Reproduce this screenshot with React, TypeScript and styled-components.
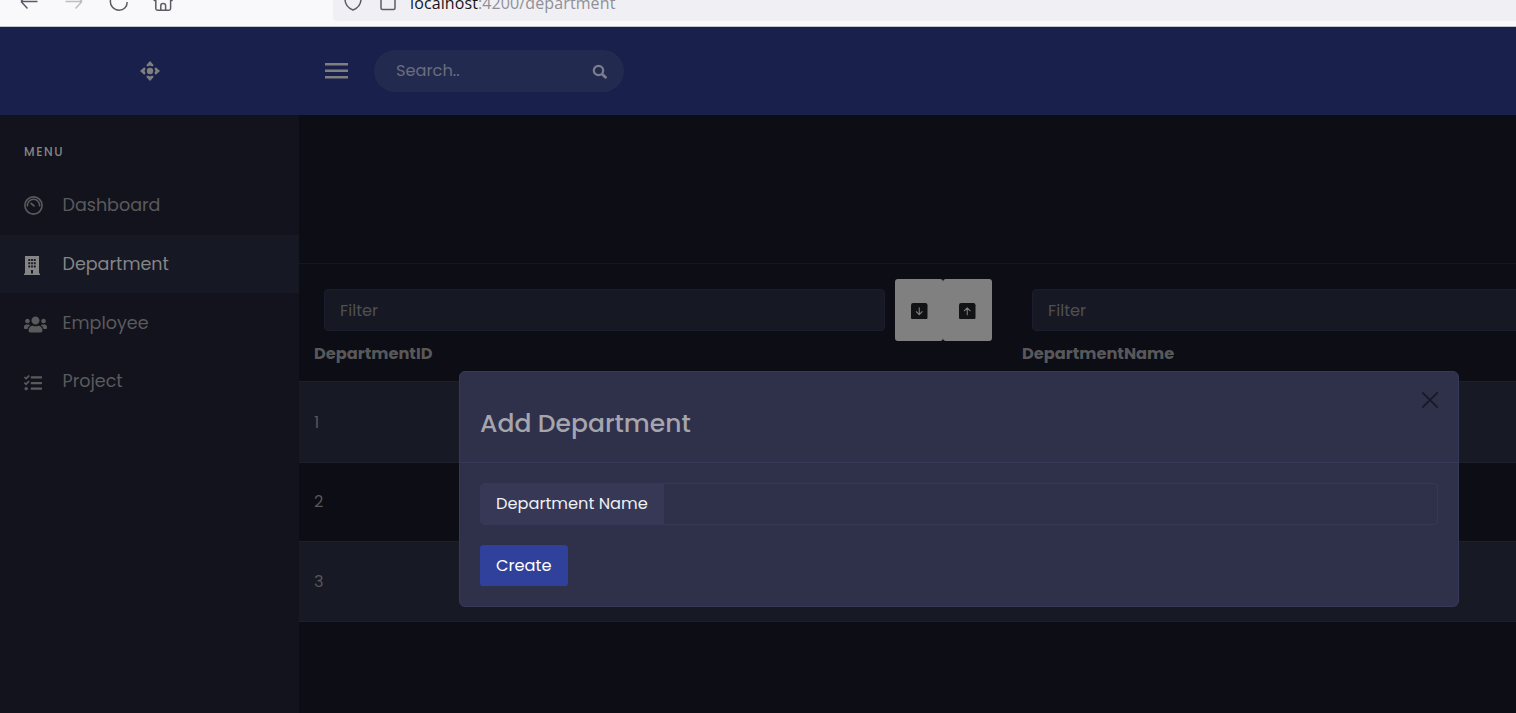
import React from "react";
import styled, { createGlobalStyle } from "styled-components";
import { FaUsers, FaTasks } from "react-icons/fa";

const Global = createGlobalStyle`
  *{box-sizing:border-box}
  html,body{margin:0;background:#0c0d15;overflow:hidden}
  body{font-family:Poppins,Inter,"Liberation Sans",sans-serif;font-size:16.22px;line-height:24px;color:#58585a}
  svg{display:block;flex:none}
`;

const Page = styled.div`height:713px;width:1516px;display:flex;flex-direction:column;overflow:hidden;position:relative;`;
const Browser = styled.div`height:27px;flex:none;background:#f9f9fb;border-bottom:1px solid #c3c3c9;display:flex;align-items:flex-start;`;
const BrowserIcons = styled.div`width:333px;display:flex;padding-left:18px;gap:21px;`;
const Address = styled.div`flex:1;height:21px;background:#f0f0f4;border-radius:0 0 0 4px;display:flex;padding-left:10px;`;
const Url = styled.div`font:16px/24px "Open Sans","Noto Sans",sans-serif;letter-spacing:0.11px;margin:-9px 0 0 10px;color:#8f8f97;white-space:nowrap;b{font-weight:400;color:#15141a}`;
const Header = styled.header`height:88px;flex:none;background:#19204c;display:flex;align-items:center;`;
const Brand = styled.div`width:300px;display:flex;justify-content:center;padding-bottom:1px;`;
const Burger = styled.div`width:23px;margin-left:25px;`;
const Search = styled.div`width:250px;height:42px;margin-left:26px;border-radius:21px;background:#232a50;color:#6b6d7d;display:flex;align-items:center;justify-content:space-between;padding:0 16px 0 22px;`;
const Body = styled.div`flex:1;display:flex;min-height:0;`;
const Sidebar = styled.nav`width:299px;background:#12131c;flex:none;`;
const MenuTitle = styled.div`padding:25px 24px 0;height:61px;font-size:12px;font-weight:500;letter-spacing:1.55px;color:#858587;`;
const Item = styled.div<{ $active?: boolean }>`height:58.7px;display:flex;align-items:center;font-size:17.55px;background:${p => (p.$active ? "#161824" : "transparent")};color:${p => (p.$active ? "#858585" : "#5a5a5c")};`;
const ItemIcon = styled.span<{ $drop?: number }>`width:38.5px;margin-left:24px;display:flex;align-items:center;padding-top:${p => p.$drop ?? 3}px;`;
const Main = styled.main`flex:1;min-width:0;overflow:hidden;padding-top:148px;`;
const Grid = styled.div`width:1416px;border-top:1px solid #16171e;`;
const HeadRow = styled.div`display:flex;height:118px;border-bottom:1px solid #1d1f2b;`;
const HeadCell = styled.div`width:708px;padding:15px 15px 0;`;
const FilterRow = styled.div`display:flex;align-items:center;height:62px;padding-left:10px;`;
const Filter = styled.div`width:561px;height:42px;margin-right:10px;border:1px solid #1b1c2d;border-radius:4px;background:#161823;padding:9px 15px 0;color:#505052;`;
const SortButton = styled.div<{ $wide?: boolean }>`width:${p => (p.$wide ? 49 : 48)}px;height:62px;border-radius:3px;background:#808080;display:flex;align-items:center;padding:2px 0 0 16px;`;
const HeadName = styled.div`font-weight:700;padding-top:1px;`;
const Row = styled.div<{ $shade?: boolean; $h: number }>`height:${p => p.$h}px;border-bottom:1px solid #1d1f2b;background:${p => (p.$shade ? "#171924" : "#0c0d15")};display:flex;align-items:center;padding:${p => (p.$shade ? 1 : 0)}px 0 0 15px;`;
const Modal = styled.section`position:absolute;left:459px;top:371px;width:1000px;height:236px;background:#2f304a;border:1px solid #373958;border-radius:6px;`;
const ModalHead = styled.div`height:91px;border-bottom:1px solid #373959;display:flex;justify-content:space-between;padding:20px 20px 0;`;
const Title = styled.h2`margin:16px 0 0;font-size:25px;line-height:32px;font-weight:500;color:#a5a5ae;`;
const ModalBody = styled.div`padding:20px;display:flex;flex-direction:column;align-items:flex-start;gap:20px;`;
const InputGroup = styled.div`width:958px;height:42px;border:1px solid #363856;border-radius:4px;display:flex;overflow:hidden;`;
const Label = styled.div`width:183px;background:#363856;color:#eef0f3;padding:8px 15px 0;white-space:nowrap;`;
const Create = styled.div`width:88px;height:41px;background:#30419b;border-radius:3px;color:#fff;padding:9px 16px 0;`;

const Sort = ({ up }: { up?: boolean }) => (
  <SortButton $wide={up}>
    <svg width="16.5" height="16.5" viewBox="0 0 17 17" fill="none">
      <rect width="17" height="17" rx="2.2" fill="#121314" />
      <path d={up ? "M8.5 12V5M5.5 8l3-3 3 3" : "M8.5 5v7M5.5 9l3 3 3-3"} stroke="#808080" strokeWidth="1.1" strokeLinecap="round" strokeLinejoin="round" />
    </svg>
  </SortButton>
);

const Column = ({ name }: { name: string }) => (
  <HeadCell>
    <FilterRow><Filter>Filter</Filter><Sort /><Sort up /></FilterRow>
    <HeadName>{name}</HeadName>
  </HeadCell>
);

const Gauge = () => (
  <svg width="19" height="19" viewBox="0 0 19 19" fill="none" stroke="currentColor" strokeWidth="1.6">
    <circle cx="9.5" cy="9.5" r="8.6" />
    <path d="M3.5 10.5A6.1 6.1 0 1 1 15.5 10.5" />
    <path d="M7.2 7.5L10 9.9" strokeWidth="1.8" strokeLinecap="round" />
  </svg>
);

const Building = () => (
  <svg width="16" height="19" viewBox="0 0 16 19" fill="currentColor">
    <path fillRule="evenodd" d="M1 0H15V17.5H16V19H0V17.5H1ZM4.3 3V5H6.2V3ZM7.1 3V5H8.9V3ZM9.8 3V5H11.7V3ZM4.3 6.3V8.3H6.2V6.3ZM9.8 6.3V8.3H11.7V6.3ZM7.1 6.3V8.3H8.9V6.3ZM4.3 9.6V11.6H6.2V9.6ZM7.1 9.6V11.6H8.9V9.6ZM9.8 9.6V11.6H11.7V9.6ZM7 14V17.5H9V14Z" />
  </svg>
);

export default function App() {
  return (
    <Page>
      <Global />
      <Browser>
        <BrowserIcons>
          <svg width="24" height="12" fill="none" stroke="#5b5b66" strokeWidth="1.5"><path d="M3 1.5H19.5M3 1.5L9.5 8.5M3 1.5L9 -5" /></svg>
          <svg width="24" height="12" fill="none" stroke="#bdbdc4" strokeWidth="1.5"><path d="M2.5 1.5H19M19 1.5L12.5 8.5M19 1.5L13-5" /></svg>
          <svg width="24" height="12" fill="none" stroke="#5b5b66" strokeWidth="1.5"><path d="M2.5 0C1.5 6 6 10.2 11 10.2C16 10.2 19.5 6.5 19 2" /></svg>
          <svg width="24" height="12" fill="none" stroke="#5b5b66" strokeWidth="1.5"><path d="M.8 1L3 -1M19.5 1L17.3 -1M2.8 0V8.5Q2.8 10.2 4.5 10.2H15.900Q17.600 10.200 17.600 8.500V0M7.800 10V5.500Q7.800 3.500 10.200 3.500Q12.600 3.500 12.600 5.500V10" /></svg>
        </BrowserIcons>
        <Address>
          <svg width="57" height="12" fill="none" stroke="#5b5b66" strokeWidth="1.5"><path d="M2-1C2 4 5 8 10 10C15 8 18 4 18-1" /><path d="M38 0V8Q38 9.5 39.5 9.5H50.5Q52 9.5 52 8V0" /></svg>
          <Url><b>localhost</b>:4200/department</Url>
        </Address>
      </Browser>
      <Header>
        <Brand>
          <svg width="20" height="20" viewBox="0 0 20 20" fill="#807f80">
            <circle cx="10" cy="10" r="3.2" />
            <path d="M10 0L13.8 4.200 12.200 5.600 10 4.500 7.800 5.600 6.200 4.200ZM10 20L13.800 15.800 12.200 14.400 10 15.500 7.800 14.400 6.200 15.800ZM0 10L4.200 6.200 5.600 7.800 4.500 10 5.600 12.200 4.200 13.800ZM20 10L15.800 6.200 14.400 7.800 15.500 10 14.400 12.200 15.800 13.800Z" />
          </svg>
        </Brand>
        <Burger>
          <svg width="23" height="16" fill="#807f80"><path d="M0 0H23V2.600H0ZM0 6.500H23V9.100H0ZM0 13H23V15.600H0Z" /></svg>
        </Burger>
        <Search>
          <span>Search..</span>
          <svg width="16" height="16" fill="none" stroke="#7c7e8b" strokeWidth="2.2" strokeLinecap="round"><circle cx="6.5" cy="7.5" r="4.7" /><path d="M10.5 11.5L13.5 14.3" strokeWidth="2.8" /></svg>
        </Search>
      </Header>
      <Body>
        <Sidebar>
          <MenuTitle>MENU</MenuTitle>
          <Item><ItemIcon $drop={0}><Gauge /></ItemIcon>Dashboard</Item>
          <Item $active><ItemIcon><Building /></ItemIcon>Department</Item>
          <Item><ItemIcon><FaUsers size={23} /></ItemIcon>Employee</Item>
          <Item><ItemIcon $drop={4}><FaTasks size={18} /></ItemIcon>Project</Item>
        </Sidebar>
        <Main>
          <Grid>
            <HeadRow><Column name="DepartmentID" /><Column name="DepartmentName" /></HeadRow>
            <Row $shade $h={81}>1</Row>
            <Row $h={79}>2</Row>
            <Row $shade $h={80}>3</Row>
          </Grid>
        </Main>
      </Body>
      <Modal>
        <ModalHead>
          <Title>Add Department</Title>
          <svg width="16" height="16" stroke="#171925" strokeWidth="1.7" strokeLinecap="round"><path d="M.8 .8L15.2 15.2M15.2 .8L.8 15.2" /></svg>
        </ModalHead>
        <ModalBody>
          <InputGroup><Label>Department Name</Label></InputGroup>
          <Create>Create</Create>
        </ModalBody>
      </Modal>
    </Page>
  );
}
